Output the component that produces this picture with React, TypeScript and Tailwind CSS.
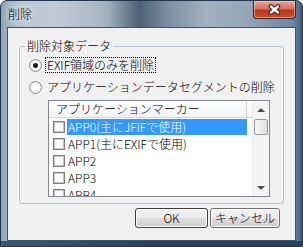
import React from 'react';

const rows = ['APP0(主にJFIFで使用)', 'APP1(主にEXIFで使用)', 'APP2', 'APP3', 'APP4'];

const Radio = ({ checked }: { checked?: boolean }) => (
  <span className="w-[13px] h-[13px] rounded-full border border-[#8e8f8f] bg-[radial-gradient(circle_at_50%_50%,#ffffff_35%,#d8d8d8_100%)] flex items-center justify-center shrink-0">
    {checked && <span className="w-[5px] h-[5px] rounded-full bg-[#1a1a1a]" />}
  </span>
);

const Check = () => (
  <span className="w-[12px] h-[12px] border border-[#7f7f7f] bg-white shadow-[inset_0_0_0_1px_#c4c4c4] shrink-0" />
);

const Btn = ({ label, dark }: { label: string; dark?: boolean }) => (
  <button
    className={
      dark
        ? 'w-[73px] h-[20px] flex items-center justify-center border border-[#3c3c3c] rounded-[3px] bg-[linear-gradient(#f2f2f2_0%,#ebebeb_50%,#dddddd_50%,#cfcfcf_100%)] shadow-[inset_0_0_0_1px_#fcfcfc]'
        : 'w-[70px] h-[20px] flex items-center justify-center border border-[#707070] rounded-[3px] bg-[linear-gradient(#f2f2f2_0%,#ebebeb_50%,#dddddd_50%,#cfcfcf_100%)] shadow-[inset_0_0_0_1px_#fcfcfc]'
    }
  >
    {label}
  </button>
);

export default function App() {
  return (
    <div className="w-[303px] h-[247px] overflow-hidden font-['Liberation_Sans_Narrow','Noto_Sans_CJK_JP',sans-serif] font-light text-[12px] leading-[16px] text-black">
      <div className="w-full h-full rounded-t-[7px] border border-[#23354b] bg-[linear-gradient(90deg,#8fa4b9_0%,#b9c6d3_6%,#c2ccd7_18%,#a5b3c1_35%,#4e6076_46%,#7a8ca0_55%,#a3b1bf_68%,#94a6b8_82%,#6a87a6_97%,#3f5d7c_100%)] flex flex-col px-[6px]">
        {/* title bar */}
        <div className="h-[26px] flex items-start">
          <span className="ml-[1px] mt-[5px] [text-shadow:0_0_6px_#ffffff,0_0_10px_#ffffff]">削除</span>
          <div className="ml-auto h-[18px] w-[43px] rounded-b-[4px] border border-t-0 border-[#4a1f16] bg-[linear-gradient(#e7a693_0%,#d27560_45%,#b7361c_55%,#c9502f_100%)] shadow-[inset_0_0_0_1px_rgba(255,220,200,0.5)] flex items-center justify-center">
            <svg width="13" height="11" viewBox="0 0 13 11">
              <path d="M3 2.5 L10 8.5 M10 2.5 L3 8.5" stroke="#4a1c12" strokeWidth="4.5" strokeLinecap="round" fill="none" />
              <path d="M3 2.5 L10 8.5 M10 2.5 L3 8.5" stroke="#ffffff" strokeWidth="2.4" strokeLinecap="round" fill="none" />
            </svg>
          </div>
        </div>

        {/* client */}
        <div className="w-[289px] h-[214px] border border-[#3d546d] bg-[#f0f0f0] flex flex-col">
          <fieldset className="ml-[11px] mt-[10px] w-[265px] h-[166px] border border-[#b9c3cb] rounded-[3px]">
            <legend className="ml-[5px] px-[2px]">削除対象データ</legend>
            <div className="mt-[3px] h-[16px] pl-[9px] flex items-center gap-[3px]">
              <Radio checked />
              <span className="border border-dotted border-black px-[1px] leading-[14px]">EXIF領域のみを削除</span>
            </div>
            <div className="mt-[6px] h-[16px] pl-[9px] flex items-center gap-[3px]">
              <Radio />
              <span className="border border-transparent px-[1px] leading-[14px]">アプリケーションデータセグメントの削除</span>
            </div>

            {/* list view */}
            <div className="mt-[5px] ml-[28px] w-[222px] h-[97px] border border-[#828790] bg-white flex overflow-hidden">
              <div className="flex-1 flex flex-col">
                <div className="h-[17px] shrink-0 flex border-b border-[#d5d5d5] bg-[linear-gradient(#ffffff,#f2f3f5)]">
                  <div className="w-[198px] pl-[7px] border-r border-[#d5d5d5] flex items-center">アプリケーションマーカー</div>
                </div>
                {rows.map((r, i) => (
                  <div key={r} className="h-[17px] shrink-0 flex items-center pl-[4px] gap-[2px]">
                    <Check />
                    <div className={i === 0 ? 'w-[180px] h-[16px] pl-[1px] bg-[#3399ff] text-white flex items-center' : 'w-[180px] h-[16px] pl-[1px] flex items-center'}>
                      {r}
                    </div>
                  </div>
                ))}
              </div>
              <div className="w-[17px] shrink-0 flex flex-col bg-[#f4f4f4] border-l border-[#ececec]">
                <div className="h-[17px] flex items-center justify-center">
                  <span className="w-0 h-0 border-l-[4px] border-r-[4px] border-b-[4px] border-l-transparent border-r-transparent border-b-[#4d4d4d]" />
                </div>
                <div className="mt-[1px] mx-[1px] h-[16px] rounded-[2px] border border-[#9b9b9b] bg-[linear-gradient(90deg,#f6f6f6,#dedede)]" />
                <div className="flex-1" />
                <div className="h-[17px] flex items-center justify-center">
                  <span className="w-0 h-0 border-l-[4px] border-r-[4px] border-t-[4px] border-l-transparent border-r-transparent border-t-[#4d4d4d]" />
                </div>
              </div>
            </div>
          </fieldset>

          <div className="mt-[4px] flex justify-end pr-[15px] gap-[2px]">
            <Btn label="OK" dark />
            <Btn label="キャンセル" />
          </div>
        </div>
        <div className="h-[5px] -mx-[6px] bg-[linear-gradient(90deg,#3d5775,#2a425e_50%,#2a425e)]" />
      </div>
    </div>
  );
}
